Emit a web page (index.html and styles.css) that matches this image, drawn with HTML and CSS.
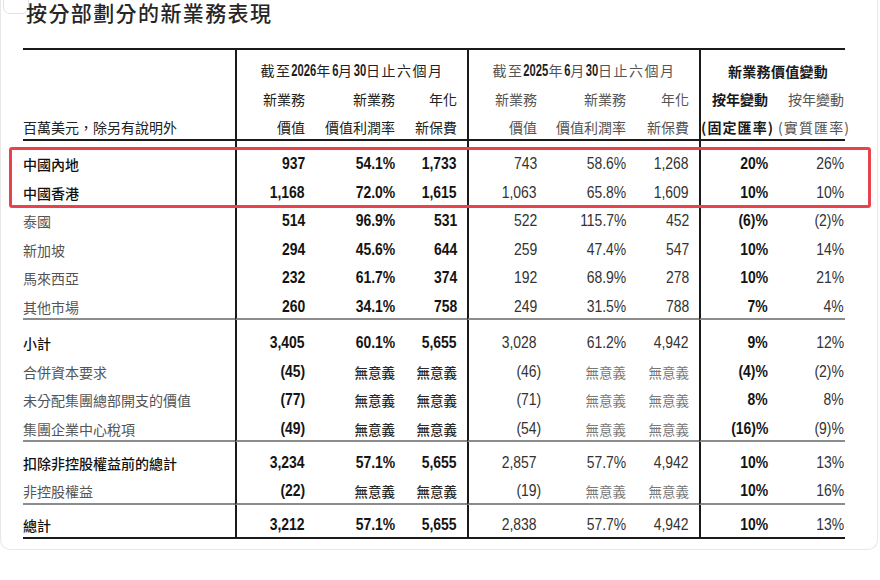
FILE: index.html
```html
<!DOCTYPE html>
<html lang="zh-Hant">
<head>
<meta charset="utf-8">
<title>按分部劃分的新業務表現</title>
<link rel="stylesheet" href="styles.css">
</head>
<body>
<div class="card">
  <div class="corner-chip"></div>
  <h1 class="title">按分部劃分的新業務表現</h1>
  <div class="table-wrap">
    <table class="nbv">
      <colgroup>
        <col class="c-label"><col class="c-a"><col class="c-b"><col class="c-c">
        <col class="c-a"><col class="c-e"><col class="c-f"><col class="c-g"><col class="c-h">
      </colgroup>
      <thead>
        <tr class="h1">
          <th class="lab"></th>
          <th colspan="3" class="grp vl dark">截至<span class="hd d4">2026</span>年<span class="hd d1">6</span>月<span class="hd d2">30</span>日止六個月</th>
          <th colspan="3" class="grp vl gray">截至<span class="hd d4">2025</span>年<span class="hd d1">6</span>月<span class="hd d2">30</span>日止六個月</th>
          <th colspan="2" class="grp grp-chg vl b">新業務價值變動</th>
        </tr>
        <tr class="h2">
          <th class="lab"></th>
          <th class="vl dark">新業務</th><th class="dark">新業務</th><th class="dark">年化</th>
          <th class="vl gray">新業務</th><th class="gray">新業務</th><th class="gray">年化</th>
          <th class="vl b">按年變動</th><th class="gray last">按年變動</th>
        </tr>
        <tr class="h3">
          <th class="lab dark">百萬美元，除另有說明外</th>
          <th class="vl dark">價值</th><th class="dark">價值利潤率</th><th class="dark">新保費</th>
          <th class="vl gray">價值</th><th class="gray">價值利潤率</th><th class="gray">新保費</th>
          <th class="vl b"><span class="paren">(固定匯率)</span></th><th class="gray last"><span class="paren">(實質匯率)</span></th>
        </tr>
      </thead>
      <tbody>
        <tr class="first-a">
          <td class="lab m">中國內地</td>
          <td class="vl n b"><span class="v">937</span></td><td class="n b"><span class="v">54.1%</span></td><td class="n b"><span class="v">1,733</span></td>
          <td class="vl n"><span class="v">743</span></td><td class="n"><span class="v">58.6%</span></td><td class="n"><span class="v">1,268</span></td>
          <td class="vl n b"><span class="v">20%</span></td><td class="n last"><span class="v">26%</span></td>
        </tr>
        <tr>
          <td class="lab m">中國香港</td>
          <td class="vl n b"><span class="v">1,168</span></td><td class="n b"><span class="v">72.0%</span></td><td class="n b"><span class="v">1,615</span></td>
          <td class="vl n"><span class="v">1,063</span></td><td class="n"><span class="v">65.8%</span></td><td class="n"><span class="v">1,609</span></td>
          <td class="vl n b"><span class="v">10%</span></td><td class="n last"><span class="v">10%</span></td>
        </tr>
        <tr>
          <td class="lab">泰國</td>
          <td class="vl n b"><span class="v">514</span></td><td class="n b"><span class="v">96.9%</span></td><td class="n b"><span class="v">531</span></td>
          <td class="vl n"><span class="v">522</span></td><td class="n"><span class="v">115.7%</span></td><td class="n"><span class="v">452</span></td>
          <td class="vl n b"><span class="v">(6)%</span></td><td class="n last"><span class="v">(2)%</span></td>
        </tr>
        <tr>
          <td class="lab">新加坡</td>
          <td class="vl n b"><span class="v">294</span></td><td class="n b"><span class="v">45.6%</span></td><td class="n b"><span class="v">644</span></td>
          <td class="vl n"><span class="v">259</span></td><td class="n"><span class="v">47.4%</span></td><td class="n"><span class="v">547</span></td>
          <td class="vl n b"><span class="v">10%</span></td><td class="n last"><span class="v">14%</span></td>
        </tr>
        <tr>
          <td class="lab">馬來西亞</td>
          <td class="vl n b"><span class="v">232</span></td><td class="n b"><span class="v">61.7%</span></td><td class="n b"><span class="v">374</span></td>
          <td class="vl n"><span class="v">192</span></td><td class="n"><span class="v">68.9%</span></td><td class="n"><span class="v">278</span></td>
          <td class="vl n b"><span class="v">10%</span></td><td class="n last"><span class="v">21%</span></td>
        </tr>
        <tr class="sec-end">
          <td class="lab">其他市場</td>
          <td class="vl n b"><span class="v">260</span></td><td class="n b"><span class="v">34.1%</span></td><td class="n b"><span class="v">758</span></td>
          <td class="vl n"><span class="v">249</span></td><td class="n"><span class="v">31.5%</span></td><td class="n"><span class="v">788</span></td>
          <td class="vl n b"><span class="v">7%</span></td><td class="n last"><span class="v">4%</span></td>
        </tr>
        <tr class="first-a">
          <td class="lab m">小計</td>
          <td class="vl n b"><span class="v">3,405</span></td><td class="n b"><span class="v">60.1%</span></td><td class="n b"><span class="v">5,655</span></td>
          <td class="vl n"><span class="v">3,028</span></td><td class="n"><span class="v">61.2%</span></td><td class="n"><span class="v">4,942</span></td>
          <td class="vl n b"><span class="v">9%</span></td><td class="n last"><span class="v">12%</span></td>
        </tr>
        <tr>
          <td class="lab">合併資本要求</td>
          <td class="vl n b"><span class="v">(45)</span></td><td class="na m">無意義</td><td class="na m">無意義</td>
          <td class="vl n"><span class="v hang">(46)</span></td><td class="na lt">無意義</td><td class="na lt">無意義</td>
          <td class="vl n b"><span class="v">(4)%</span></td><td class="n last"><span class="v">(2)%</span></td>
        </tr>
        <tr>
          <td class="lab">未分配集團總部開支的價值</td>
          <td class="vl n b"><span class="v">(77)</span></td><td class="na m">無意義</td><td class="na m">無意義</td>
          <td class="vl n"><span class="v hang">(71)</span></td><td class="na lt">無意義</td><td class="na lt">無意義</td>
          <td class="vl n b"><span class="v">8%</span></td><td class="n last"><span class="v">8%</span></td>
        </tr>
        <tr class="sec-end">
          <td class="lab">集團企業中心稅項</td>
          <td class="vl n b"><span class="v">(49)</span></td><td class="na m">無意義</td><td class="na m">無意義</td>
          <td class="vl n"><span class="v hang">(54)</span></td><td class="na lt">無意義</td><td class="na lt">無意義</td>
          <td class="vl n b"><span class="v">(16)%</span></td><td class="n last"><span class="v">(9)%</span></td>
        </tr>
        <tr class="first-b">
          <td class="lab m">扣除非控股權益前的總計</td>
          <td class="vl n b"><span class="v">3,234</span></td><td class="n b"><span class="v">57.1%</span></td><td class="n b"><span class="v">5,655</span></td>
          <td class="vl n"><span class="v">2,857</span></td><td class="n"><span class="v">57.7%</span></td><td class="n"><span class="v">4,942</span></td>
          <td class="vl n b"><span class="v">10%</span></td><td class="n last"><span class="v">13%</span></td>
        </tr>
        <tr class="sec-end">
          <td class="lab">非控股權益</td>
          <td class="vl n b"><span class="v">(22)</span></td><td class="na m">無意義</td><td class="na m">無意義</td>
          <td class="vl n"><span class="v hang">(19)</span></td><td class="na lt">無意義</td><td class="na lt">無意義</td>
          <td class="vl n b"><span class="v">10%</span></td><td class="n last"><span class="v">16%</span></td>
        </tr>
        <tr class="first-b sec-final">
          <td class="lab m">總計</td>
          <td class="vl n b"><span class="v">3,212</span></td><td class="n b"><span class="v">57.1%</span></td><td class="n b"><span class="v">5,655</span></td>
          <td class="vl n"><span class="v">2,838</span></td><td class="n"><span class="v">57.7%</span></td><td class="n"><span class="v">4,942</span></td>
          <td class="vl n b"><span class="v">10%</span></td><td class="n last"><span class="v">13%</span></td>
        </tr>
      </tbody>
    </table>
    <div class="highlight"></div>
  </div>
</div>
</body>
</html>
```
FILE: styles.css
```css
* { box-sizing: border-box; }
html, body { margin: 0; padding: 0; background: #ffffff; }
body {
  width: 880px;
  height: 580px;
  overflow: hidden;
  font-family: "Noto Sans CJK TC", "Noto Sans CJK SC", sans-serif;
  color: #222;
}
.card {
  position: relative;
  width: 878px;
  height: 550px;
  border: 1px solid #e7e7e7;
  border-top: none;
  border-radius: 0 0 10px 10px;
  padding: 0 0 0 22px;
}
.corner-chip {
  position: absolute;
  left: 2px;
  top: -12px;
  width: 26px;
  height: 26px;
  border: 1px solid #e2e2e2;
  border-radius: 7px;
}
.title {
  position: relative;
  margin: 0;
  padding-left: 3px;
  font-size: 21px;
  line-height: 24px;
  font-weight: 500;
  letter-spacing: 1.4px;
  color: #262626;
}
.table-wrap {
  position: relative;
  margin-top: 24px;
  width: 822px;
}
.nbv {
  border-collapse: separate;
  border-spacing: 0;
  table-layout: fixed;
  width: 822px;
  font-size: 14px;
  line-height: 20px;
}
.c-label { width: 212px; }
.c-a { width: 80px; }
.c-b { width: 90px; }
.c-c { width: 62px; }
.c-e { width: 89px; }
.c-f { width: 63px; }
.c-g { width: 79px; }
.c-h { width: 67px; }

.nbv th, .nbv td {
  padding: 4.25px 10px 4.25px 0;
  text-align: right;
  white-space: nowrap;
  font-weight: 400;
  vertical-align: middle;
}
.nbv .lab { text-align: left; padding-left: 0; }
.nbv .last { padding-right: 1px; }
.nbv .vl { border-left: 2px solid #1a1a1a; }
.nbv .b { font-weight: 700; }
.nbv .m { font-weight: 500; }

/* header */
.nbv thead tr.h1 th { border-top: 2px solid #1a1a1a; padding-top: 10px; padding-bottom: 4px; }
.nbv thead tr.h2 th { padding-top: 4px; padding-bottom: 4px; }
.nbv thead tr.h3 th { border-bottom: 2px solid #1a1a1a; padding-top: 4px; padding-bottom: 2px; }
.nbv th.grp { text-align: center; padding-right: 0; padding-left: 0; letter-spacing: 1.5px; }
.nbv th.grp-chg { padding-left: 10px; letter-spacing: 0.3px; }
.hd {
  display: inline-block;
  font-family: "Liberation Sans", Arial, sans-serif;
  font-weight: 700;
  font-size: 16px;
  letter-spacing: 0;
  color: #1e1e1e;
  transform: scaleX(0.7);
  transform-origin: 50% 50%;
}
.hd.d1 { margin: 0 -1.33px; }
.hd.d2 { margin: 0 -2.67px; }
.hd.d4 { margin: 0 -5.34px; }
.dark { color: #222; }
.gray { color: #555; }
.nbv th.b { color: #1a1a1a; }
.paren { letter-spacing: 1.1px; margin-right: -3px; }

/* body */
.nbv td { color: #555; }
.nbv td.lab.m { color: #111; }
.nbv td.n {
  font-family: "Liberation Sans", Arial, sans-serif;
  font-size: 17px;
  color: #333;
}
.v {
  display: inline-block;
  transform: scaleX(0.82);
  transform-origin: 100% 50%;
}
.hang { margin-right: -4px; }
.nbv td.n.b { color: #141414; }
.nbv td.na { font-size: 13.5px; color: #2a2a2a; }
.nbv td.na.lt { color: #777; }

.nbv tr.first-a td { padding-top: 13px; }
.nbv tr.first-b td { padding-top: 10.5px; }
.nbv tr.sec-end td { padding-bottom: 1.5px; border-bottom: 2px solid #8c8c8c; }
.nbv tr.sec-final td { padding-bottom: 1.5px; border-bottom: 2.5px solid #1a1a1a; }

.highlight {
  position: absolute;
  left: -14px;
  top: 98.5px;
  width: 862px;
  height: 61.5px;
  border: 3px solid #e8434d;
  border-radius: 3px;
  pointer-events: none;
}
```
